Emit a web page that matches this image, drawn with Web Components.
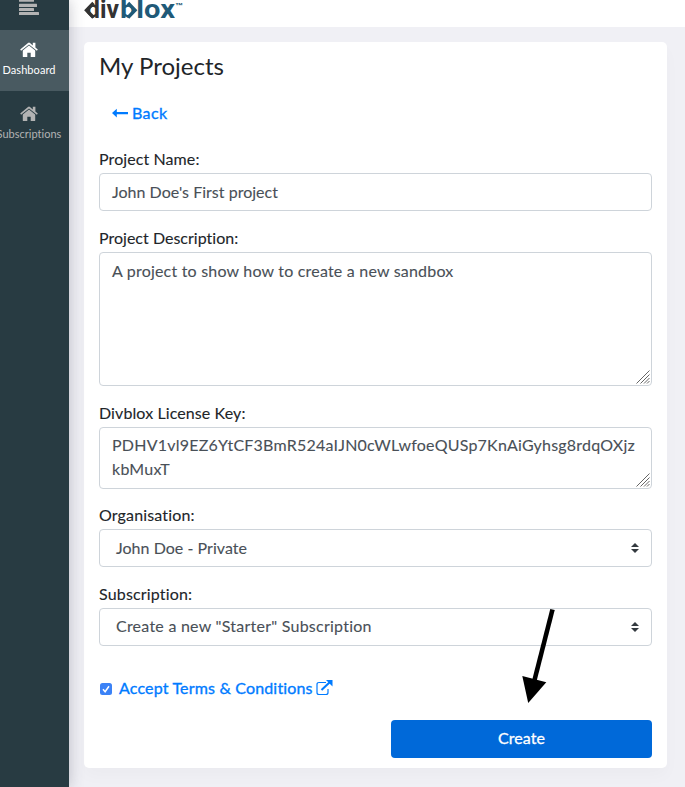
<!DOCTYPE html>
<html lang="en"><head><meta charset="utf-8"><title>My Projects</title>
<style>
body{margin:0;width:685px;height:787px;overflow:hidden;background:#f0f0f5;font:16px/24px Lato,"Liberation Sans",sans-serif;color:#212529}
</style></head><body>
<app-shell></app-shell>
<script>
function define(name, markup, ready){
  customElements.define(name, class extends HTMLElement{
    connectedCallback(){
      if(this.shadowRoot) return;
      const t=document.createElement('template');
      t.innerHTML=markup;
      this.attachShadow({mode:'open'}).append(t.content.cloneNode(true));
      if(ready) ready(this,this.shadowRoot);
    }
  });
}
/* Text tracked so that it spans a given width */
define('fit-text','<style>:host{display:inline-block;white-space:pre;-webkit-text-stroke:var(--ink,.1px)}</style><span><slot></slot></span>',(el,root)=>{
  const w=+el.getAttribute('w'), s=root.querySelector('span');
  const n=el.textContent.length;
  const d=(w-s.getBoundingClientRect().width)/n;
  el.style.letterSpacing=d.toFixed(4)+'px';
});
define('home-icon',`<style>:host{display:block;height:16px}svg{display:block}</style>
<svg width="18" height="16" viewBox="0 0 18 16" fill="currentColor"><path d="M9 3.4 2.8 8.6V14.4q0 .6.6.6H7.3V10.7h3.4V15h3.9q.6 0 .6-.6V8.6z"/><path d="M17.8 7.6 15.4 5.6V.8h-2.6v2.7L10 1Q9 .2 8 1L.2 7.6l.9 1.2L9 2.4l7.9 6.4z"/></svg>`);
define('nav-item',`<style>:host{display:flex;flex-direction:column;align-items:center;box-sizing:border-box;height:61px;padding-top:12px;color:#b3b3b3;font-size:11px;line-height:14px;--ink:0}
:host([active]){background:#495a61;color:#fff}.t{display:flex;justify-content:center;margin-top:5px}home-icon{margin-right:11px}.t{margin-right:11px}</style>
<home-icon></home-icon><div class="t"><slot></slot></div>`);
define('side-bar',`<style>:host{display:block;width:69px;height:787px;background:#283b42;box-shadow:0 0 14px rgba(60,60,80,.3);z-index:1}
.m{height:30px;padding-left:19px}nav-item+nav-item{margin-top:3px}svg{display:block}</style>
<div class="m"><svg width="20" height="16" fill="#b3b3b3"><rect y="-1" width="15" height="2.8" rx=".5"/><rect y="3.8" width="18" height="3.2" rx=".5"/><rect y="8" width="15" height="3" rx=".5"/><rect y="12" width="20" height="3" rx=".5"/></svg></div>
<nav-item active><fit-text w="53">Dashboard</fit-text></nav-item>
<nav-item><fit-text w="65">Subscriptions</fit-text></nav-item>`);
define('top-bar',`<style>:host{display:block;height:27px;background:#fff}svg{display:block}</style>
<svg width="130" height="26" font-family="Roboto" font-weight="700"><text y="18" x="17" font-size="26" textLength="33" lengthAdjust="spacingAndGlyphs" fill="#333">div</text><text y="18" x="51" font-size="26" textLength="55" lengthAdjust="spacingAndGlyphs" fill="#1f5a78">blox</text><text x="106" y="9" font-size="8" textLength="8" lengthAdjust="spacingAndGlyphs" fill="#1f5a78">™</text>
<path d="M15 0h11l-11 11zM15 10l10 10H15z" fill="#fff"/><path d="M24.5 3 17.5 10.2 24.5 17.5" fill="none" stroke="#333" stroke-width="3.4"/>
<path d="M57.500 0H67v11zM67 9v11h-9z" fill="#fff"/><path d="M59 3 66 10.200 59 17.500" fill="none" stroke="#1f5a78" stroke-width="3.400"/></svg>`);
define('form-field',`<style>:host{display:block;margin-bottom:16px}label{display:block;height:25px;line-height:22px}
.box{box-sizing:border-box;border:1px solid #ced4da;border-radius:4px;height:var(--h,38px);padding:var(--p,6px) 12px;color:#495057;position:relative;background:#fff}
:host([kind=select]) .box{padding-left:16px}svg{position:absolute;display:none}
:host([kind=select]) .s{display:block;right:12px;top:13px}:host([kind=area]) .g{display:block;right:1px;bottom:1px}</style>
<label><slot name="label"></slot></label><div class="box"><slot></slot>
<svg class="s" width="8" height="10" fill="#343a40"><path d="M4 0 8 4H0zM0 6h8L4 10z"/></svg>
<svg class="g" width="14" height="14" stroke="#666" stroke-width="1"><path d="M.5 13.5 13.5.5M4.500 13.500l9-9M8 13.500l5.500-5.500M11 13.500l2.500-2.500"/></svg></div>`);
define('back-link',`<style>:host{display:flex;align-items:center;color:#007bff;margin:21px 0 23px 13px;height:24px;gap:4px;--ink:.35px}</style>
<svg width="16" height="10" fill="currentColor"><path d="M0 5 4.800.8V4H16v2.200H4.800v3.200z"/></svg><fit-text w="35.500">Back</fit-text>`);
define('terms-row',`<style>:host{display:flex;align-items:center;height:22px;margin-top:31px;color:#007bff;--ink:.35px}.c{margin:2px 7px 0 1px}.e{margin-left:3px}</style>
<svg class="c" width="12" height="12"><rect width="12" height="12" rx="2.500" fill="#3b82f6"/><path d="M3 6.300 5.100 8.700 9 3.200" fill="none" stroke="#fff" stroke-width="1.500"/></svg><fit-text w="194">Accept Terms &amp; Conditions</fit-text>
<svg class="e" width="17" height="16"><path d="M10 2.500H3Q1 2.500 1 4.500v8q0 2 2 2h7q2 0 2-2V9" fill="none" stroke="currentColor" stroke-width="1.200"/><path d="M5.500 10 14 2" stroke="currentColor" stroke-width="2"/><path d="M10 0h6.500v6.500z" fill="currentColor"/></svg>`);
define('action-button',`<style>:host{display:flex;align-items:center;justify-content:center;box-sizing:border-box;width:261px;height:38px;margin:21px 0 0 auto;padding-bottom:2px;border-radius:4px;background:#0069d9;color:#fff;--ink:.3px}</style><slot></slot>`);
define('project-card',`<style>:host{display:block;box-sizing:border-box;width:583px;height:726px;margin:15px 0 0 15px;padding:9px 15px;background:#fff;border-radius:5px;box-shadow:0 8px 16px rgba(0,0,0,.025)}
h1{font-size:24px;line-height:29px;height:29px;font-weight:400;margin:0;--ink:0}</style>
<h1><fit-text w="125" style="line-height:27px">My Projects</fit-text></h1><back-link></back-link>
<form-field><fit-text slot="label" w="100.500">Project Name:</fit-text><fit-text w="166">John Doe's First project</fit-text></form-field>
<form-field kind="area" style="--h:134px"><fit-text slot="label" w="139.500">Project Description:</fit-text><fit-text w="341.500">A project to show how to create a new sandbox</fit-text></form-field>
<form-field kind="area" style="--h:62px;--p:5px;margin-bottom:15px"><fit-text slot="label" w="146.500">Divblox License Key:</fit-text><fit-text w="523">PDHV1vl9EZ6YtCF3BmR524aIJN0cWLwfoeQUSp7KnAiGyhsg8rdqOXjz</fit-text><br><fit-text w="58">kbMuxT</fit-text></form-field>
<form-field kind="select"><fit-text slot="label" w="96">Organisation:</fit-text><fit-text w="131">John Doe - Private</fit-text></form-field>
<form-field kind="select" style="--p:5px;margin-bottom:0"><fit-text slot="label" w="93.500">Subscription:</fit-text><fit-text w="256">Create a new "Starter" Subscription</fit-text></form-field>
<terms-row></terms-row><action-button><fit-text w="47">Create</fit-text></action-button>`);
define('pointer-arrow',`<style>:host{position:absolute;left:520px;top:606px;z-index:2}svg{display:block}</style>
<svg width="36" height="100"><path d="M32.500 3.500 14 76" stroke="#000" stroke-width="4.600"/><path d="M2.300 70 26.300 76.200 8.200 97z"/></svg>`);
define('app-shell',`<style>:host{display:flex;height:787px;position:relative}main{flex:1}</style><side-bar></side-bar><main><top-bar></top-bar><project-card></project-card></main><pointer-arrow></pointer-arrow>`);
</script></body></html>
